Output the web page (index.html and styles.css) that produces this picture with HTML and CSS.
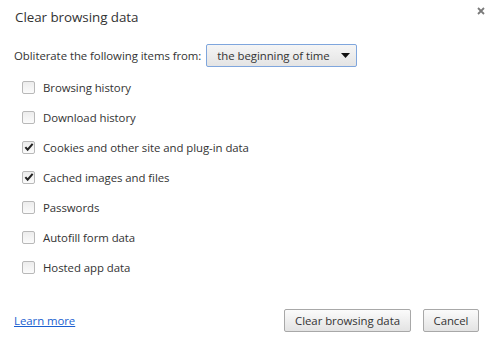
FILE: index.html
```html
<!DOCTYPE html>
<html>
<head>
<meta charset="utf-8">
<link rel="stylesheet" href="styles.css">
</head>
<body>
<div class="dialog">
  <div class="header">
    <h1 class="title">Clear browsing data</h1>
    <button class="close" aria-label="Close">
      <svg width="8" height="8" viewBox="0 0 8 8"><path d="M1 1L7 7M7 1L1 7" stroke="#7a7a7a" stroke-width="1.8"/></svg>
    </button>
  </div>
  <div class="range-row">
    <span class="range-label">Obliterate the following items from:</span>
    <div class="select">
      <span>the beginning of time</span>
      <svg class="arrow" width="9" height="5" viewBox="0 0 9 5"><path d="M0 0H9L4.5 5Z" fill="#111"/></svg>
    </div>
  </div>
  <ul class="items">
    <li class="item"><span class="box"></span>Browsing history</li>
    <li class="item"><span class="box"></span>Download history</li>
    <li class="item"><span class="box checked"><svg width="11" height="10" viewBox="0 0 11 10"><path d="M1.5 5.2L4 8L9.5 1.5" fill="none" stroke="#222" stroke-width="2.2"/></svg></span>Cookies and other site and plug-in data</li>
    <li class="item"><span class="box checked"><svg width="11" height="10" viewBox="0 0 11 10"><path d="M1.5 5.2L4 8L9.5 1.5" fill="none" stroke="#222" stroke-width="2.2"/></svg></span>Cached images and files</li>
    <li class="item"><span class="box"></span>Passwords</li>
    <li class="item"><span class="box"></span>Autofill form data</li>
    <li class="item"><span class="box"></span>Hosted app data</li>
  </ul>
  <div class="footer">
    <a class="learn" href="#">Learn more</a>
    <div class="buttons">
      <button class="btn btn-clear">Clear browsing data</button>
      <button class="btn btn-cancel">Cancel</button>
    </div>
  </div>
</div>
</body>
</html>
```
FILE: styles.css
```css
html, body {
  margin: 0;
  padding: 0;
  background: #fff;
}
body {
  font-family: "Open Sans", "Noto Sans", sans-serif;
  font-size: 11.4px;
  letter-spacing: -0.05px;
  color: #333;
}
.dialog {
  width: 493px;
  height: 339px;
  box-sizing: border-box;
  padding: 0 15px 0 14px;
  display: flex;
  flex-direction: column;
}
.header {
  height: 34px;
  display: flex;
  align-items: center;
  justify-content: space-between;
}
.title {
  margin: 0 0 0 1px;
  font-size: 13.4px;
  font-weight: normal;
  color: #333;
  line-height: 34px;
}
.close {
  border: 0;
  background: none;
  padding: 0;
  width: 8px;
  height: 8px;
  align-self: flex-start;
  margin-top: 7px;
  margin-right: -7px;
  display: flex;
}
.range-row {
  margin-top: 10px;
  height: 23px;
  display: flex;
  align-items: center;
  gap: 5px;
}
.select {
  width: 151px;
  height: 23px;
  box-sizing: border-box;
  border: 1px solid #7fa6dd;
  border-radius: 2px;
  background: linear-gradient(#f5f5f5, #e4e4e4);
  display: flex;
  align-items: center;
  justify-content: space-between;
  padding: 0 6px 0 10px;
}
.arrow {
  display: block;
}
.items {
  list-style: none;
  margin: 5px 0 0 0;
  padding: 0;
}
.item {
  height: 30px;
  display: flex;
  align-items: center;
  padding-left: 8px;
}
.box {
  width: 13px;
  height: 13px;
  box-sizing: border-box;
  border: 1px solid #b8b8b8;
  border-radius: 2px;
  background: linear-gradient(#ececec, #fbfbfb);
  margin-right: 8px;
  display: flex;
  align-items: center;
  justify-content: center;
}
.box svg {
  display: block;
  margin-left: 1px;
}
.footer {
  margin-top: 27px;
  display: flex;
  align-items: center;
  justify-content: space-between;
}
.learn {
  color: #1a5fd0;
  text-decoration: underline;
}
.buttons {
  display: flex;
  gap: 12px;
  margin-right: -1px;
}
.btn {
  height: 23px;
  box-sizing: border-box;
  border: 1px solid #a8a8a8;
  border-radius: 2px;
  background: linear-gradient(#fbfbfb, #e3e3e3);
  font-family: inherit;
  font-size: inherit;
  letter-spacing: inherit;
  color: #333;
  padding: 0;
  white-space: nowrap;
  text-align: center;
}
.btn-clear {
  width: 127px;
}
.btn-cancel {
  width: 56px;
}
```
